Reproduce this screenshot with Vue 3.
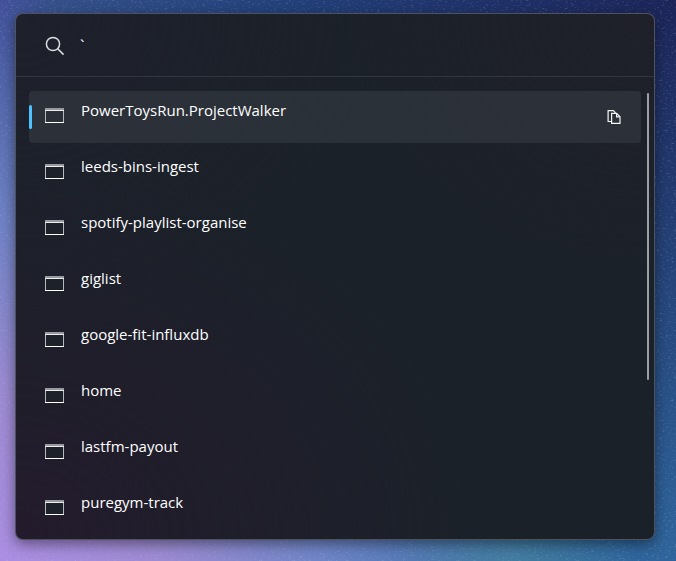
<script setup>
import { ref } from 'vue'

const query = ref('`')
const selected = ref(0)
const projects = [
  'PowerToysRun.ProjectWalker',
  'leeds-bins-ingest',
  'spotify-playlist-organise',
  'giglist',
  'google-fit-influxdb',
  'home',
  'lastfm-payout',
  'puregym-track',
]
</script>

<template>
  <main class="desktop">
    <svg class="grain" aria-hidden="true">
      <filter id="speckle" x="0" y="0" width="100%" height="100%">
        <feTurbulence type="fractalNoise" baseFrequency="0.35 0.6" numOctaves="2" seed="4" />
        <feColorMatrix values="0 0 0 0 0.5  0 0 0 0 0.7  0 0 0 0 0.8  3 0 0 0 -1.75" />
      </filter>
      <rect width="100%" height="100%" filter="url(#speckle)" />
    </svg>
    <section class="launcher">
      <form class="search" role="search" @submit.prevent>
        <label class="search-icon" for="query" aria-label="Search">
          <svg width="20" height="20" viewBox="0 0 20 20" fill="none" stroke="#dcdee1" stroke-width="1.5">
            <circle cx="8" cy="8" r="6.6" />
            <path d="M12.7 12.7 18.6 18.6" />
          </svg>
        </label>
        <input id="query" v-model="query" class="query" type="text" autocomplete="off" spellcheck="false" />
      </form>
      <div class="results">
        <ul class="list">
          <li v-for="(name, i) in projects" :key="name" class="row" :class="{ active: i === selected }">
            <span class="marker"></span>
            <button class="pick" type="button" @click="selected = i">
              <svg class="window" width="19" height="15" viewBox="0 0 19 15" shape-rendering="crispEdges">
                <rect width="19" height="15" fill="#b5b7ba" />
                <rect width="19" height="2" fill="#989a9f" />
                <rect y="2" width="19" height="1" fill="#eceded" />
                <rect class="pane" x="1" y="3" width="17" height="11" />
                <rect y="14" width="19" height="1" fill="#ffffff" />
              </svg>
              <span class="name">{{ name }}</span>
            </button>
            <button v-if="i === selected" class="copy" type="button" aria-label="Copy path">
              <svg width="14" height="14" viewBox="0 0 14 14" fill="none" stroke="#f4f5f5" stroke-width="1.2">
                <path d="M4 11.5H1.1V.6H6.4L8.6 2.8" />
                <path d="M4.6 3.4H9.6L13 6.8V13.4H4.6Z" />
                <path d="M9.6 3.8V6.8H12.6" />
              </svg>
            </button>
          </li>
        </ul>
        <div class="track"><div class="thumb"></div></div>
      </div>
    </section>
  </main>
</template>

<style>
body {
  margin: 0;
  background: #2a4a86;
}
</style>

<style scoped>
.desktop {
  position: relative;
  box-sizing: border-box;
  min-height: 100vh;
  padding: 13px 21px 21px 15px;
  font-family: 'Open Sans', 'Noto Sans', sans-serif;
  background:
    radial-gradient(circle at 76% 102%, rgba(78, 140, 160, 0.6) 0%, transparent 16%),
    radial-gradient(ellipse 80% 100% at 0% 100%, #ab8de2 0%, #9c8ad2 30%, rgba(125, 140, 208, 0.8) 60%, transparent 100%),
    linear-gradient(to bottom, transparent 0%, #2f659c 100%),
    linear-gradient(to right, #42509a 0%, #35508a 8%, #23407a 42%, #1c2458 100%);
}
.grain {
  position: absolute;
  inset: 0;
  width: 100%;
  height: 100%;
  opacity: 0.25;
}
.launcher {
  position: relative;
  box-sizing: border-box;
  border: 1px solid rgba(150, 160, 175, 0.4);
  border-radius: 8px;
  background:
    radial-gradient(ellipse at 0% 100%, #231b2c 0%, rgba(35, 27, 44, 0) 50%),
    radial-gradient(ellipse at 100% 0%, #1f202a 0%, rgba(31, 32, 42, 0) 35%),
    radial-gradient(ellipse at 0% 0%, #1e202b 0%, rgba(30, 32, 43, 0) 40%),
    #1b2129;
  box-shadow: 0 4px 14px rgba(0, 0, 0, 0.45);
}
.search {
  box-sizing: border-box;
  display: flex;
  align-items: center;
  gap: 15px;
  height: 63px;
  padding: 2px 29px 0;
  border-bottom: 1px solid #31353d;
}
.search-icon {
  display: flex;
}
.query {
  flex: 1;
  min-width: 0;
  padding: 0;
  border: 0;
  outline: 0;
  color: #fff;
  background: transparent;
  font: inherit;
  font-size: 16px;
}
.results {
  display: flex;
  gap: 6px;
  padding: 14px 5px 0 13px;
}
.list {
  flex: 1;
  display: grid;
  gap: 4px;
  margin: 0;
  padding: 0 0 4px;
  list-style: none;
}
.row {
  display: flex;
  align-items: center;
  height: 52px;
  padding-right: 20px;
  border-radius: 4px;
}
.active {
  background: rgba(240, 250, 255, 0.075);
}
.marker {
  width: 3px;
  height: 24px;
  border-radius: 2px;
}
.active .marker {
  background: #4cc2ff;
}
.pick {
  flex: 1;
  display: flex;
  align-items: flex-start;
  gap: 17px;
  height: 52px;
  padding: 8px 0 0 13px;
  border: 0;
  color: #fff;
  background: transparent;
  font: inherit;
  font-size: 15px;
  line-height: 22px;
  text-align: left;
}
.window {
  margin-top: 9px;
}
.pane {
  fill: #1d212a;
}
.active .pane {
  fill: #2b2f38;
}
.copy {
  display: flex;
  padding: 0;
  border: 0;
  background: transparent;
}
.track {
  width: 2px;
  padding-top: 2px;
}
.thumb {
  height: 287px;
  border-radius: 1px;
  background: #9c9fa3;
}
</style>
